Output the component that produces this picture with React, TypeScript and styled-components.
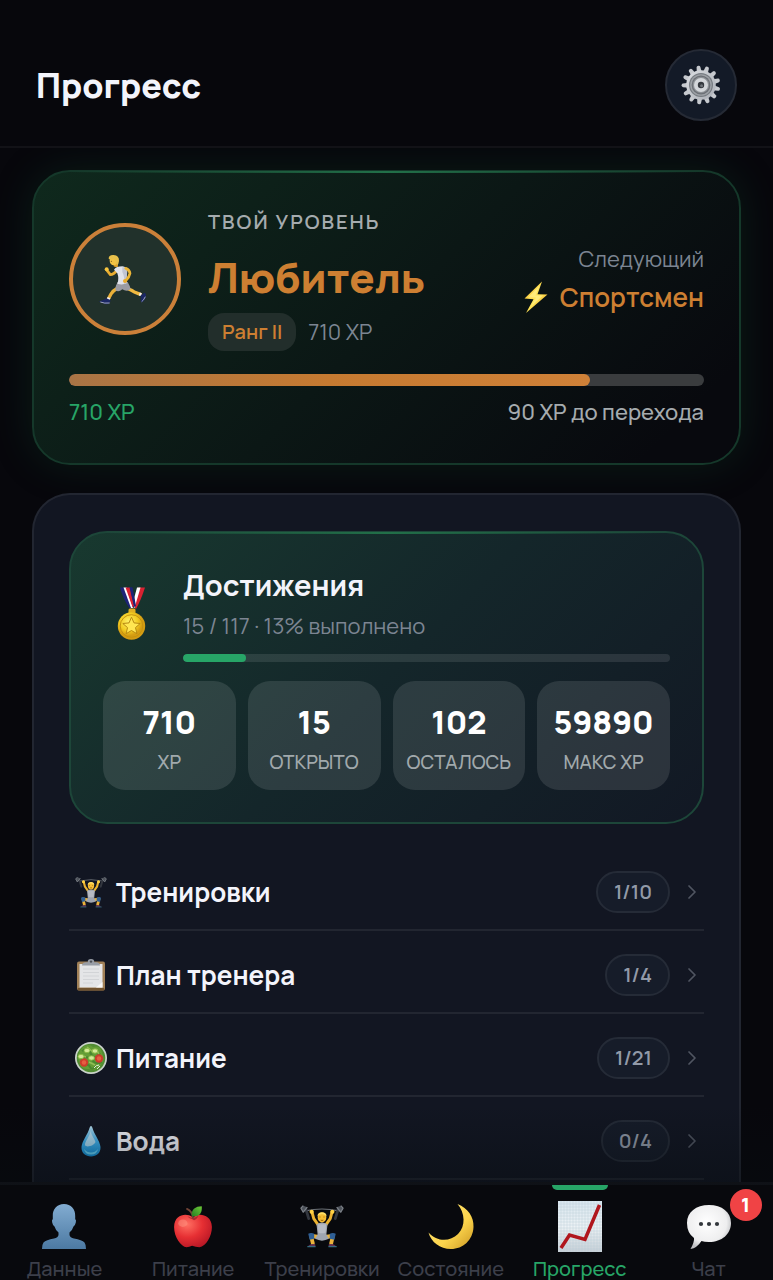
import React from "react";
import styled, { createGlobalStyle } from "styled-components";
import { ChevronRight } from "lucide-react";

const color = {
  page: "#07070c",
  panel: "#121622",
  text: "#f3f4fb",
  muted: "#7c8592",
  soft: "#a5abae",
  orange: "#cd7f32",
  green: "#27a567",
  line: "rgba(255, 255, 255, 0.07)",
};

const GlobalStyle = createGlobalStyle`
  *, *::before, *::after { box-sizing: border-box; }
  body {
    margin: 0;
    background: ${color.page};
    color: ${color.text};
    font-family: Manrope, Inter, "Noto Sans", sans-serif;
  }
  button { font: inherit; color: inherit; background: none; border: 0; padding: 0; margin: 0; cursor: pointer; }
  h1, h2, p, ul, dl, dd { margin: 0; padding: 0; }
  ul { list-style: none; }
  svg { display: block; flex-shrink: 0; }
`;

/* ---------- Icons ---------- */

const GearIcon = ({ size }: { size: number }) => (
  <svg width={size} height={size} viewBox="0 0 40 40" aria-hidden="true">
    <defs>
      <linearGradient id="gearBody" x1="0" y1="0" x2="1" y2="1">
        <stop offset="0" stopColor="#dcdfe3" />
        <stop offset="1" stopColor="#a9adb4" />
      </linearGradient>
    </defs>
    {Array.from({ length: 13 }, (_, i) => (
      <path key={i} d="M17.4 8 18.1 2Q18.300 .6 20 .6Q21.700 .6 21.900 2L22.600 8Z" fill="#c6c9ce" transform={`rotate(${i * (360 / 13) - 8} 20 20)`} />
    ))}
    <circle cx="20" cy="20" r="14.8" fill="url(#gearBody)" />
    <circle cx="20" cy="20" r="12" fill="#777c82" />
    <circle cx="20" cy="20" r="10.8" fill="#9da1a6" />
    <circle cx="20" cy="20" r="9.4" fill="#6c7076" />
    <circle cx="20" cy="20" r="8.2" fill="#8e9297" />
    <circle cx="20" cy="20" r="7" fill="#d3d6da" />
    <circle cx="20" cy="20" r="3.2" fill="#34383e" />
    <circle cx="20.6" cy="20.8" r="1.5" fill="#70757b" />
  </svg>
);

const RunnerIcon = ({ size }: { size: number }) => (
  <svg width={size} height={size} viewBox="42 69 156 156" aria-hidden="true">
    <g fill="none" strokeLinecap="round" strokeLinejoin="round">
      <path d="M98 118Q86 134 76 134L66 121" stroke="#e9ad30" strokeWidth="8" />
      <path d="M98 174Q84 182 78 192L70 207" stroke="#eab038" strokeWidth="10" />
      <path d="M124 174Q140 180 148 186L166 193" stroke="#f0b940" strokeWidth="10" />
      <path d="M72 203 69 210M163 192 169 194" stroke="#f2f2f5" strokeWidth="9" strokeLinecap="butt" />
    </g>
    <circle cx="65" cy="118" r="6" fill="#f7c640" />
    <path d="M42 214Q56 211 64 205L76 210Q77 222 64 223Q50 220 42 214Z" fill="#1b2763" />
    <path d="M167 195Q176 192 178 188Q185 190 182 203Q176 216 169 217Q165 212 168 205Z" fill="#1b2763" />
    <path d="M46 216Q58 221 74 219M181 200Q176 211 170 215" fill="none" stroke="#dfe2ee" strokeWidth="2" />
    <path d="M98 156 128 156Q136 170 137 177Q126 187 112 178Q100 188 91 180Q90 169 98 156Z" fill="#9b9ba3" />
    <path d="M87 119Q94 109 112 109Q126 110 124 126L125 160Q112 166 97 161Q103 146 97 130Z" fill="#e1e3eb" />
    <path d="M112 112Q128 112 127 124L124 160 117 162Q120 142 112 126Z" fill="#c1c5d3" />
    <path d="M122 115Q134 120 135 130Q133 142 122 152" fill="none" stroke="#edb637" strokeWidth="8" strokeLinecap="round" strokeLinejoin="round" />
    <circle cx="120" cy="153" r="6" fill="#e9ab2d" />
    <path d="M86 102 98 98 99 110Q91 113 86 109Z" fill="#dfa128" />
    <ellipse cx="86" cy="92" rx="12" ry="14" fill="#f4c444" />
    <path d="M71 86Q71 74 86 75Q103 76 102 93Q101 104 96 106L92 94 86 87 76 89Z" fill="#e8c14b" />
    <circle cx="79" cy="94" r="1.500" fill="#593c10" />
  </svg>
);

const MedalIcon = ({ size }: { size: number }) => (
  <svg width={size} height={size} viewBox="0 0 56 56" aria-hidden="true">
    <defs>
      <radialGradient id="medalGold" cx=".4" cy=".35">
        <stop offset="0" stopColor="#fff06a" />
        <stop offset=".65" stopColor="#f2cc22" />
        <stop offset="1" stopColor="#d49c12" />
      </radialGradient>
    </defs>
    <path d="M30 20 35.500 1.500 42 1.500Q38 14 33 23Z" fill="#d92231" />
    <path d="M29 20 34 1.500 37.500 1.500 31.500 22Z" fill="#fff" />
    <path d="M17 1.500 29.500 1.500 33 20 27 23Q20 13 17 1.500Z" fill="#1d2377" />
    <path d="M20.500 1.500 23.500 1.500 30 22 28 22Z" fill="#fff" />
    <path d="M22.500 1.500 27 1.500 31 20 29.500 21Z" fill="#d92231" />
    <path d="M26.500 1.500 29 1.500 32 16 31 20Z" fill="#1d2377" />
    <rect x="25.500" y="22.500" width="7" height="6" rx="1.500" fill="#e2b021" />
    <circle cx="28.500" cy="40" r="13.700" fill="url(#medalGold)" />
    <circle cx="28.500" cy="40" r="11.300" fill="none" stroke="#c4920f" strokeWidth="1" />
    <path d="m28.500 31.200 2.500 5.700 6.200.6-4.700 4.100 1.400 6.100-5.400-3.200-5.400 3.200 1.400-6.100-4.700-4.100 6.200-.6Z" fill="#ffe652" stroke="#b88a12" strokeWidth="1" />
  </svg>
);

const BoltIcon = ({ size }: { size: number }) => (
  <svg width={size} height={size} viewBox="0 0 32 32" aria-hidden="true">
    <defs>
      <linearGradient id="bolt" x1="0" y1="0" x2="1" y2="1">
        <stop offset="0" stopColor="#f6b62a" />
        <stop offset=".5" stopColor="#ffe659" />
        <stop offset="1" stopColor="#f0a51c" />
      </linearGradient>
    </defs>
    <path d="M22 .5 4.500 17.500 13.500 18.200 6 32 27.500 13.500 17.500 13.200Z" fill="url(#bolt)" />
    <path d="M19.500 4.500 8 16.500 16 16.500 11 25.500 23 14.500 15.500 14.500Z" fill="#fff08a" opacity=".75" />
  </svg>
);

const LifterIcon = ({ size }: { size: number }) => (
  <svg width={size} height={size} viewBox="0 0 48 48" aria-hidden="true">
    <path d="M6 7.500Q24 3.500 42 7.500" fill="none" stroke="#6d7278" strokeWidth="1.200" />
    <path d="M6.500 6 9.500 16M41.500 6 38.500 16" stroke="#33373f" strokeWidth="3" strokeLinecap="round" />
    <path d="M3.500 1.800 1 4.500 3.500 9 8 3.500M44.500 1.800 47 4.500 44.500 9 40 3.500" fill="#4e535b" stroke="#7b8087" strokeWidth="1.300" strokeLinejoin="round" />
    <g fill="none" strokeLinecap="round" strokeLinejoin="round">
      <path d="M13 8.500 15 16 20 23M35 8.500 33 16 28 23" stroke="#ecb331" strokeWidth="3.200" />
      <path d="M20 36 12 34.500 14 43M28 36 36 34.500 34 43" stroke="#ebb23b" strokeWidth="4.200" />
    </g>
    <circle cx="12.700" cy="8.500" r="2.300" fill="#ffd145" />
    <circle cx="35.300" cy="8.500" r="2.300" fill="#ffd145" />
    <path d="M18 22Q24 18.500 30 22L28.800 33 31.500 38Q24 42 16.500 38L19.200 33Z" fill="#9fa5b0" />
    <path d="M19.500 22 28.500 22 28 31Q24 33 20 31Z" fill="#b7bbc4" />
    <path d="M9 32.500Q12 30.500 15.500 32.500L15.500 38 10.500 39ZM39 32.500Q36 30.500 32.500 32.500L32.500 38 37.500 39Z" fill="#2f5f95" />
    <path d="M8.500 46Q12 42.500 16.500 44L17 46ZM39.500 46Q36 42.500 31.500 44L31 46Z" fill="#633052" />
    <path d="M8 46.500H17M31 46.500H40" stroke="#346c81" strokeWidth="1.200" />
    <ellipse cx="24" cy="14.800" rx="4.700" ry="5.400" fill="#f6bd34" />
    <path d="M19 13.500Q19.200 9 24 9Q28.800 9 29 13.500Q26.500 10.800 24 11.200Q21 10.800 19 13.500Z" fill="#ffde65" />
    <path d="M21.300 14.200h1M25.700 14.200h1M22.500 17.500Q24 18.500 25.500 17.500" stroke="#83520e" strokeWidth=".9" fill="none" />
  </svg>
);

const ClipboardIcon = ({ size }: { size: number }) => (
  <svg width={size} height={size} viewBox="0 0 32 32" aria-hidden="true">
    <rect x="2" y="2.500" width="28" height="29" rx="2" fill="#a08057" />
    <rect x="2.500" y="29" width="27" height="2.500" rx="1" fill="#71532f" />
    <path d="M4.500 5h23v23.500h-23Z" fill="#e4e5e7" />
    <path d="M8 10h16M8 13.500h16M8 17h16M8 20.500h16M8 24h10" stroke="#d2d4d7" strokeWidth="1" />
    <path d="M21 28.500 27.500 23V28.500Z" fill="#f8f8f8" />
    <path d="M7 6.500Q7 3.500 11 3.300H12.800Q12.500 0 16 0Q19.500 0 19.200 3.300H21Q25 3.500 25 6.500Z" fill="#989da6" />
    <circle cx="16" cy="2.600" r="1.200" fill="#4d5058" />
  </svg>
);

const SaladIcon = ({ size }: { size: number }) => (
  <svg width={size} height={size} viewBox="0 0 32 32" aria-hidden="true">
    <circle cx="16" cy="16" r="16" fill="#cbd3cb" />
    <circle cx="16" cy="16" r="14.300" fill="#518c32" />
    <path d="M8 5Q14 1 18 5Q26 3 27 11Q31 18 25 24Q21 30 14 27Q5 28 4 19Q1 12 8 5Z" fill="#639d36" />
    <path d="M7 9Q13 5 16 12T25 11M6 17Q13 13 17 18T27 20M10 24Q13 21 15 25T21 24" stroke="#4a872f" strokeWidth="2" fill="none" />
    <path d="M12 5 18 10M21 7 24 12M14 20 20 23M5 13 11 15" stroke="#91bd55" strokeWidth="1.500" />
    <circle cx="9" cy="20.500" r="4.200" fill="#cd3d2c" />
    <circle cx="24" cy="16.500" r="4.200" fill="#cd3d2c" />
    <circle cx="9" cy="20.500" r="2.200" fill="#e65e42" />
    <circle cx="24" cy="16.500" r="2.200" fill="#e65e42" />
    {[[6, 14.5], [16.5, 16], [12, 8.5], [20, 9]].map(([x, y]) => (
      <ellipse key={x} cx={x} cy={y} rx="2.900" ry="2.200" fill="#d3ea98" stroke="#88b944" strokeWidth=".9" />
    ))}
    <path d="M19 26Q21 23 24 23M22 27 25 24" stroke="#e5edda" strokeWidth="1" fill="none" />
  </svg>
);

const DropIcon = ({ size }: { size: number }) => (
  <svg width={size} height={size} viewBox="0 0 32 32" aria-hidden="true">
    <defs>
      <linearGradient id="drop" x1="0" y1="0" x2="0" y2="1">
        <stop offset="0" stopColor="#b9e0f2" />
        <stop offset=".5" stopColor="#41b0ec" />
        <stop offset="1" stopColor="#148ed2" />
      </linearGradient>
    </defs>
    <path d="M16 1Q17 1 17.500 3C19 9 25 16 25.500 22C25.800 28 21.500 31.500 16 31.500S6.200 28 6.500 22C7 16 13 9 14.500 3Q15 1 16 1Z" fill="url(#drop)" />
    <path d="M15.500 6C15 11 9.500 17 10 20C11 23 19 21 20.500 17C19.500 14 16.500 10 15.500 6Z" fill="#cfeaf4" opacity=".75" />
    <path d="M9 24Q10 29.500 16 29.500Q22 29.500 23 24Q20 27.500 16 27.500Q12 27.500 9 24Z" fill="#63d0f6" />
  </svg>
);

const PersonIcon = ({ size }: { size: number }) => (
  <svg width={size} height={size} viewBox="0 0 52 52" aria-hidden="true">
    <defs>
      <linearGradient id="person" x1="0" y1="0" x2="0" y2="1">
        <stop offset="0" stopColor="#82acd1" />
        <stop offset="1" stopColor="#4c79a2" />
      </linearGradient>
    </defs>
    <path d="M26 4C33 4 37.500 9 37.200 16V19Q38.500 20 37.800 22.500Q37.200 25.500 35.500 26.500Q34.500 30 31.500 32.500V35Q32 37.500 36 38.500Q44 40 46.500 42.500Q48 44.500 48 49H4Q4 44.500 5.500 42.500Q8 40 16 38.500Q20 37.500 20.500 35V32.500Q17.500 30 16.500 26.500Q14.800 25.500 14.200 22.500Q13.500 20 14.800 19V16C14.500 9 19 4 26 4Z" fill="url(#person)" />
  </svg>
);

const AppleIcon = ({ size }: { size: number }) => (
  <svg width={size} height={size} viewBox="0 0 52 52" aria-hidden="true">
    <defs>
      <radialGradient id="apple" cx=".35" cy=".3" r=".8">
        <stop offset="0" stopColor="#ff6f62" />
        <stop offset=".5" stopColor="#e62f33" />
        <stop offset="1" stopColor="#b31524" />
      </radialGradient>
      <linearGradient id="leaf" x1="0" y1="1" x2="1" y2="0">
        <stop offset="0" stopColor="#267e22" />
        <stop offset="1" stopColor="#6ecb38" />
      </linearGradient>
    </defs>
    <path d="M25 16C20 12 6 12 5.500 27C5.500 38 13 48.500 19 49Q22 49 25 47.500Q29 49 33 49C40 48 46.500 37 46.500 27C46 13 32 12 28 15.500Q26 17 25 16Z" fill="url(#apple)" />
    <path d="M20 15.500Q26 19 32 15Q28 22 25 18.500Q22 18.500 20 15.500Z" fill="#98202a" opacity=".8" />
    <path d="M26 17Q25 10 19.500 7.500" fill="none" stroke="#704235" strokeWidth="2" strokeLinecap="round" />
    <path d="M25 15.500C23 8 29 4.500 35.500 4.500C36 11 34 16 25 15.500Z" fill="url(#leaf)" />
    <ellipse cx="15" cy="23" rx="5" ry="4" fill="#ff9b88" opacity=".45" />
  </svg>
);

const MoonIcon = ({ size }: { size: number }) => (
  <svg width={size} height={size} viewBox="0 0 52 52" aria-hidden="true">
    <defs>
      <linearGradient id="moon" x1="0" y1="0" x2="1" y2="1">
        <stop offset="0" stopColor="#ffe87c" />
        <stop offset=".6" stopColor="#fcd44c" />
        <stop offset="1" stopColor="#ca9722" />
      </linearGradient>
    </defs>
    <path d="M32.500 4C43 8 49 17 48.500 27C48 40 38 49 26 49C15 49 6 42 3.500 32.500C12 42 25 42 33 34C41 26 40 13 32.500 4Z" fill="url(#moon)" />
  </svg>
);

const ChartIcon = ({ size }: { size: number }) => (
  <svg width={size} height={size} viewBox="0 0 52 52" aria-hidden="true">
    <defs>
      <linearGradient id="paper" x1="0" y1="0" x2="0" y2="1">
        <stop offset="0" stopColor="#d9e6ef" />
        <stop offset=".5" stopColor="#edf2f5" />
        <stop offset="1" stopColor="#c7d0d7" />
      </linearGradient>
    </defs>
    <path d="M4 1H48V52H4Z" fill="url(#paper)" />
    <path d={Array.from({ length: 14 }, (_, i) => `M${7 + i * 3} 1V52`).join("") + Array.from({ length: 16 }, (_, i) => `M4 ${4 + i * 3}H48`).join("")} stroke="#b7c9d7" strokeWidth=".4" />
    <path d="M7 48 15.500 35 31 39.500 45.500 5" fill="none" stroke="#b0161d" strokeWidth="3.500" />
  </svg>
);

const ChatIcon = ({ size }: { size: number }) => (
  <svg width={size} height={size} viewBox="0 0 52 52" aria-hidden="true">
    <defs>
      <radialGradient id="bubble" cx=".45" cy=".4" r=".6">
        <stop offset="0" stopColor="#fff" />
        <stop offset=".75" stopColor="#eeeeef" />
        <stop offset="1" stopColor="#bfc0c3" />
      </radialGradient>
    </defs>
    <path d="M26 5C39 5 48 12 48 23S39 42 26 42Q21 42 18.500 41Q14 48 7.500 49Q11.500 42 11 38Q4 33 4 23C4 12 13 5 26 5Z" fill="url(#bubble)" />
    <g fill="#33373c"><circle cx="18" cy="24" r="2.100" /><circle cx="26" cy="24" r="2.100" /><circle cx="34" cy="24" r="2.100" /></g>
  </svg>
);

/* ---------- Layout ---------- */

const Shell = styled.div`
  display: flex;
  flex-direction: column;
  height: 100vh;
`;

const Header = styled.header`
  display: flex;
  align-items: center;
  justify-content: space-between;
  flex-shrink: 0;
  padding: 49px 36px 25px;
  border-bottom: 2px solid #121217;
`;

const PageTitle = styled.h1`
  font-size: 34px;
  line-height: 44px;
  font-weight: 800;
`;

const RoundButton = styled.button`
  display: grid;
  place-items: center;
  width: 72px;
  height: 72px;
  border: 2px solid #252a35;
  border-radius: 50%;
  background: #131a27;
`;

const Main = styled.main`
  flex: 1;
  min-height: 0;
  overflow: hidden auto;
  scrollbar-width: none;
  padding: 22px 32px 0;
  display: flex;
  flex-direction: column;
  gap: 28px;
`;

const Card = styled.section`
  position: relative;
  flex-shrink: 0;
  padding: 36px 35px;
  border: 2px solid ${color.line};
  border-radius: 38px;
  background: ${color.panel};
`;

const GreenCard = styled(Card)<{ $glow?: boolean }>`
  border-color: ${(p) => (p.$glow ? "#15382a" : "#1d4639")};
  background: ${(p) =>
    p.$glow
      ? "linear-gradient(135deg, #0f291d 0%, #0b1715 50%, #08090e 90%)"
      : "linear-gradient(135deg, #18392f 0%, #14262a 50%, #121824 100%)"};
  box-shadow: ${(p) => (p.$glow ? "0 0 42px rgba(20, 90, 55, 0.24)" : "none")};
  padding: ${(p) => (p.$glow ? "35px 35px 37px" : "32px")};

  &::before {
    content: "";
    position: absolute;
    top: -1px;
    left: 36px;
    right: 36px;
    height: 2px;
    background: linear-gradient(90deg, transparent, #227049, transparent);
  }
`;

const LevelRow = styled.div`
  display: flex;
  align-items: center;
  gap: 27px;
  margin-bottom: 23px;
`;

const Avatar = styled.div`
  display: grid;
  place-items: center;
  flex-shrink: 0;
  width: 112px;
  height: 112px;
  border: 4px solid #cb8039;
  border-radius: 50%;
  background: #21312b;
`;

const LevelInfo = styled.div`
  flex: 1;
  min-width: 0;
`;

const Overline = styled.p`
  font-size: 20px;
  line-height: 30px;
  font-weight: 600;
  letter-spacing: 2px;
  color: ${color.soft};
`;

const LevelName = styled.h2`
  margin: 10px 0 6px;
  font-size: 42px;
  line-height: 60px;
  font-weight: 800;
  color: ${color.orange};
`;

const RankLine = styled.div`
  display: flex;
  align-items: center;
  gap: 12px;
`;

const RankPill = styled.span`
  padding: 0 14px;
  border-radius: 16px;
  background: #222e2b;
  color: ${color.orange};
  font-size: 20px;
  line-height: 38px;
  font-weight: 600;
`;

const Muted = styled.span`
  font-size: 22px;
  color: ${color.muted};
`;

const NextLevel = styled.div`
  display: flex;
  flex-direction: column;
  align-items: flex-end;
  padding-bottom: 3px;
  line-height: 38px;
`;

const NextName = styled.strong`
  display: flex;
  align-items: center;
  gap: 8px;
  font-size: 26px;
  font-weight: 600;
  color: ${color.orange};
`;

const Track = styled.div<{ $height: number; $tone: string }>`
  height: ${(p) => p.$height}px;
  border-radius: ${(p) => p.$height / 2}px;
  background: ${(p) => p.$tone};
  overflow: hidden;
`;

const Fill = styled.div<{ $paint: string }>`
  height: 100%;
  border-radius: inherit;
  background: ${(p) => p.$paint};
`;

const TrackCaption = styled.div`
  display: flex;
  justify-content: space-between;
  margin-top: 12px;
  font-size: 22px;
  line-height: 28px;
  font-weight: 500;
  color: ${color.soft};
`;

const Earned = styled.span`
  color: ${color.green};
`;

const SummaryHead = styled.div`
  display: flex;
  align-items: center;
  gap: 24px;
  margin-bottom: 19px;
`;

const SummaryText = styled.div`
  flex: 1;
`;

const SummaryTitle = styled.h2`
  font-size: 29px;
  line-height: 40px;
  font-weight: 700;
`;

const SummaryNote = styled.p`
  margin-bottom: 7px;
  font-size: 22px;
  line-height: 42px;
  color: ${color.muted};
`;

const Stats = styled.dl`
  display: grid;
  grid-template-columns: repeat(4, 1fr);
  gap: 12px;
`;

const Stat = styled.div`
  display: flex;
  flex-direction: column-reverse;
  padding: 20px 0 9px;
  border-radius: 22px;
  background: rgba(255, 255, 255, 0.11);
  text-align: center;
`;

const StatLabel = styled.dt`
  font-size: 19px;
  line-height: 38px;
  font-weight: 500;
  color: #a1a9ac;
`;

const StatValue = styled.dd`
  font-size: 32px;
  line-height: 42px;
  font-weight: 800;
  color: #fff;
`;

const Categories = styled.ul`
  margin-top: 24px;
`;

const CategoryButton = styled.button`
  display: flex;
  align-items: center;
  width: 100%;
  height: 83px;
  padding: 6px 0 0 6px;
  border-bottom: 2px solid ${color.line};
  text-align: left;
`;

const CategoryName = styled.span`
  flex: 1;
  margin-left: 9px;
  font-size: 26px;
  font-weight: 700;
`;

const Count = styled.span`
  margin-right: 10px;
  padding: 0 16px;
  border: 2px solid #252b37;
  border-radius: 21px;
  background: #161c29;
  color: #929aa8;
  font-size: 20px;
  line-height: 38px;
  font-weight: 600;
`;

const TabBar = styled.nav`
  position: relative;
  display: grid;
  grid-template-columns: repeat(6, 1fr);
  flex-shrink: 0;
  height: 98px;
  border-top: 3px solid #15161c;
  background: #08090d;

  &::before {
    content: "";
    position: absolute;
    left: 0;
    right: 0;
    bottom: 100%;
    height: 80px;
    pointer-events: none;
    background: linear-gradient(to bottom, transparent, rgba(7, 12, 16, 0.45));
  }
`;

const Tab = styled.button<{ $active?: boolean }>`
  position: relative;
  display: flex;
  flex-direction: column;
  align-items: center;
  gap: 5px;
  padding-top: 15px;
  font-size: 20px;
  line-height: 24px;
  font-weight: 500;
  color: ${(p) => (p.$active ? color.green : "#3c3f4a")};

  &::before {
    content: "";
    display: ${(p) => (p.$active ? "block" : "none")};
    position: absolute;
    top: 0;
    width: 56px;
    height: 5px;
    border-radius: 0 0 6px 6px;
    background: ${color.green};
  }
`;

const TabIcon = styled.span`
  display: grid;
  place-items: center;
  height: 52px;
`;

const Badge = styled.span`
  position: absolute;
  top: 4px;
  left: calc(50% + 21px);
  width: 32px;
  height: 32px;
  border-radius: 50%;
  background: #f04345;
  color: #fff;
  font-size: 20px;
  line-height: 32px;
  font-weight: 800;
  text-align: center;
`;

/* ---------- Data ---------- */

const stats = [
  { value: 710, label: "XP" },
  { value: 15, label: "ОТКРЫТО" },
  { value: 102, label: "ОСТАЛОСЬ" },
  { value: 59890, label: "МАКС XP" },
];

const categories = [
  { name: "Тренировки", count: "1/10", Icon: LifterIcon },
  { name: "План тренера", count: "1/4", Icon: ClipboardIcon },
  { name: "Питание", count: "1/21", Icon: SaladIcon },
  { name: "Вода", count: "0/4", Icon: DropIcon },
];

const tabs = [
  { name: "Данные", Icon: PersonIcon, size: 52 },
  { name: "Питание", Icon: AppleIcon, size: 48 },
  { name: "Тренировки", Icon: LifterIcon, size: 44 },
  { name: "Состояние", Icon: MoonIcon, size: 52 },
  { name: "Прогресс", Icon: ChartIcon, size: 52, active: true },
  { name: "Чат", Icon: ChatIcon, size: 52, unread: 1 },
];

type ProgressProps = { value: number; label: string; height: number; tone: string; paint: string };

const Progress = ({ value, label, height, tone, paint }: ProgressProps) => (
  <Track $height={height} $tone={tone} role="progressbar" aria-label={label} aria-valuenow={value} aria-valuemin={0} aria-valuemax={100}>
    <Fill $paint={paint} style={{ width: `${value}%` }} />
  </Track>
);

export default function App() {
  return (
    <Shell>
      <GlobalStyle />
      <Header>
        <PageTitle>Прогресс</PageTitle>
        <RoundButton type="button" aria-label="Настройки">
          <GearIcon size={40} />
        </RoundButton>
      </Header>

      <Main>
        <GreenCard $glow>
          <LevelRow>
            <Avatar>
              <RunnerIcon size={52} />
            </Avatar>
            <LevelInfo>
              <Overline>ТВОЙ УРОВЕНЬ</Overline>
              <LevelName>Любитель</LevelName>
              <RankLine>
                <RankPill>Ранг II</RankPill>
                <Muted>710 XP</Muted>
              </RankLine>
            </LevelInfo>
            <NextLevel>
              <Muted>Следующий</Muted>
              <NextName>
                <BoltIcon size={32} />
                Спортсмен
              </NextName>
            </NextLevel>
          </LevelRow>
          <Progress value={82} label="Прогресс уровня" height={12} tone="#3a3c3e" paint="linear-gradient(90deg, #a97445, #c67a31 50%, #cf8138)" />
          <TrackCaption>
            <Earned>710 XP</Earned>
            <span>90 XP до перехода</span>
          </TrackCaption>
        </GreenCard>

        <Card>
          <GreenCard>
            <SummaryHead>
              <MedalIcon size={56} />
              <SummaryText>
                <SummaryTitle>Достижения</SummaryTitle>
                <SummaryNote>15 / 117 · 13% выполнено</SummaryNote>
                <Progress value={13} label="Выполнено достижений" height={8} tone="rgba(255, 255, 255, 0.1)" paint={color.green} />
              </SummaryText>
            </SummaryHead>
            <Stats>
              {stats.map((s) => (
                <Stat key={s.label}>
                  <StatLabel>{s.label}</StatLabel>
                  <StatValue>{s.value}</StatValue>
                </Stat>
              ))}
            </Stats>
          </GreenCard>
          <Categories>
            {categories.map(({ name, count, Icon }) => (
              <li key={name}>
                <CategoryButton type="button">
                  <Icon size={32} />
                  <CategoryName>{name}</CategoryName>
                  <Count>{count}</Count>
                  <ChevronRight size={24} strokeWidth={1.75} color="#505561" aria-hidden="true" />
                </CategoryButton>
              </li>
            ))}
          </Categories>
        </Card>
      </Main>

      <TabBar>
        {tabs.map(({ name, Icon, size, active, unread }) => (
          <Tab key={name} type="button" $active={active} aria-current={active ? "page" : undefined}>
            <TabIcon>
              <Icon size={size} />
            </TabIcon>
            {name}
            {unread && <Badge>{unread}</Badge>}
          </Tab>
        ))}
      </TabBar>
    </Shell>
  );
}
